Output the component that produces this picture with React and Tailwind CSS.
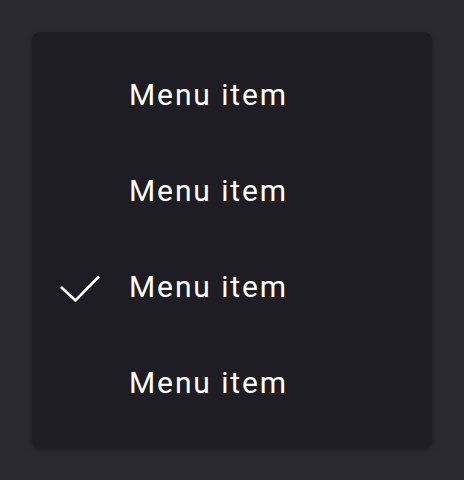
import React from 'react';

const items = [
  { label: 'Menu item', checked: false },
  { label: 'Menu item', checked: false },
  { label: 'Menu item', checked: true },
  { label: 'Menu item', checked: false },
];

const CheckMark = () => (
  <svg width="40" height="30" viewBox="0 0 40 30" fill="none">
    <path d="M1 14 L15.5 27.5 L39 3.5" stroke="#ffffff" strokeWidth="2.6" strokeLinecap="butt" strokeLinejoin="miter" />
  </svg>
);

const App = () => {
  return (
    <div className="w-[464px] h-[480px] bg-[#2b2a33] p-8" style={{ fontFamily: 'Roboto, "Noto Sans", sans-serif' }}>
      <div className="w-[400px] rounded-lg bg-[#1e1d23] py-4 shadow-[0_2px_6px_rgba(0,0,0,0.35)]">
        {items.map((item, i) => (
          <div key={i} className="flex h-24 items-center pl-7">
            <div className="flex w-10 items-center justify-center">
              {item.checked && <CheckMark />}
            </div>
            <span className="ml-[29px] mb-1 text-[30px] tracking-[1.9px] text-white">{item.label}</span>
          </div>
        ))}
      </div>
    </div>
  );
};

export default App;
